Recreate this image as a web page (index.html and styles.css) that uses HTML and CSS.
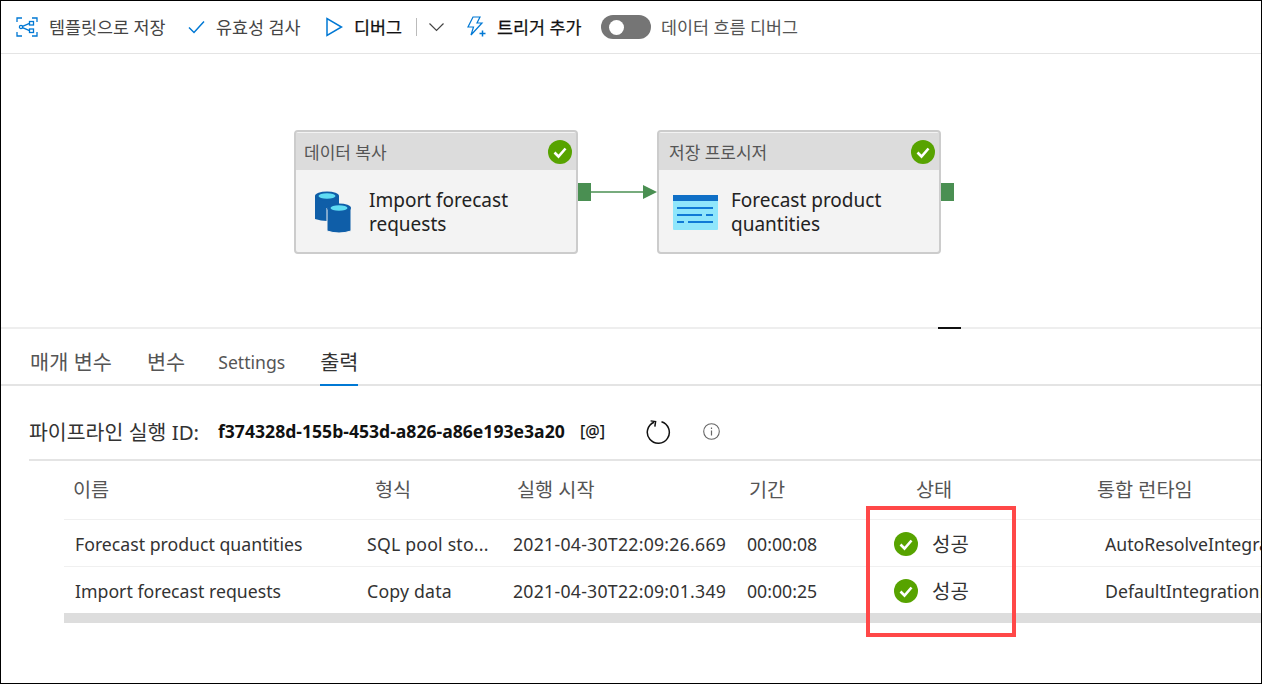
FILE: index.html
```html
<!DOCTYPE html>
<html lang="ko">

<head>
	<meta charset="UTF-8">
	<title>파이프라인 실행</title>
	<link rel="stylesheet" href="styles.css">
</head>

<body>
	<div class="frame">

		<div class="toolbar">
			<div class="tool tool-template">
				<svg class="icon" width="22" height="20" viewBox="0 0 22 20" fill="none" stroke="#0078d4" stroke-width="1.3">
					<path d="M1 5V1h5M16 1h5v4M21 15v4h-5M6 19H1v-4"/>
					<circle cx="5" cy="10" r="1.6"/>
					<rect x="13.5" y="4.5" width="4" height="3.5"/>
					<rect x="13.5" y="12" width="4" height="3.5"/>
					<path d="M6.5 9.3l7-3M6.5 10.7l7 3"/>
				</svg>
				<span>템플릿으로 저장</span>
			</div>
			<div class="tool tool-validate">
				<svg class="icon" width="17" height="14" viewBox="0 0 17 14" fill="none" stroke="#0078d4" stroke-width="1.5">
					<path d="M1 7.5l5 5L16 1.5"/>
				</svg>
				<span>유효성 검사</span>
			</div>
			<div class="tool tool-debug">
				<svg class="icon" width="17" height="20" viewBox="0 0 17 20" fill="none" stroke="#0078d4" stroke-width="1.5">
					<path d="M1 1.5v17L15.5 10z"/>
				</svg>
				<span class="strong">디버그</span>
			</div>
			<div class="tool-sep"></div>
			<svg class="chevron" width="17" height="10" viewBox="0 0 17 10" fill="none" stroke="#444" stroke-width="1.2">
				<path d="M1.5 1.5L8.5 8.5 15.5 1.5"/>
			</svg>
			<div class="tool tool-trigger">
				<svg class="icon" width="21" height="22" viewBox="0 0 21 22" fill="none" stroke="#0078d4" stroke-width="1.2">
					<path d="M7 1h7l-3 6h5L5 19l2.500-8H2z"/>
					<path d="M16.500 14.500v6M13.500 17.500h6" stroke-width="1.5"/>
				</svg>
				<span class="strong">트리거 추가</span>
			</div>
			<div class="toggle"><div class="knob"></div></div>
			<span class="toggle-label">데이터 흐름 디버그</span>
		</div>

		<div class="canvas">
			<div class="node node-copy">
				<div class="node-head">데이터 복사</div>
				<div class="node-body">
					<svg class="node-icon" width="37" height="42" viewBox="0 0 37 42">
						<path d="M0 5h24v23q-12 4-24 0z" fill="#0f5ea8"/>
						<ellipse cx="12" cy="5" rx="12" ry="4.500" fill="#0f5ea8"/>
						<ellipse cx="12" cy="5" rx="8.500" ry="2.800" fill="#5fdcf3"/>
						<path d="M12 17h24v23q-12 4-24 0z" fill="#0f5ea8" stroke="#f3f3f3"/>
						<ellipse cx="24" cy="17" rx="12" ry="4.500" fill="#0f5ea8"/>
						<ellipse cx="24" cy="17" rx="8.500" ry="2.800" fill="#5fdcf3"/>
					</svg>
					<div class="node-title">Import forecast requests</div>
				</div>
				<svg class="node-check" width="24" height="24" viewBox="0 0 24 24">
					<circle cx="12" cy="12" r="12" fill="#57a300"/>
					<path d="M6.500 12.500l4 4 7-8" fill="none" stroke="#fff" stroke-width="2.600"/>
				</svg>
			</div>

			<div class="port port-copy"></div>
			<svg class="link" width="66" height="16" viewBox="0 0 66 16">
				<path d="M0 8h54" stroke="#4a8f52" stroke-width="1.500"/>
				<path d="M52 1l14 7-14 7z" fill="#4a8f52"/>
			</svg>

			<div class="node node-proc">
				<div class="node-head">저장 프로시저</div>
				<div class="node-body">
					<svg class="node-icon" width="45" height="35" viewBox="0 0 45 35">
						<rect width="45" height="35" rx="1" fill="#8fe6fb"/>
						<rect width="45" height="6" fill="#0f6fc6"/>
						<path d="M4 13h36M4 20h25M33 20h7M4 27h7M15 27h25" stroke="#0f7ad6" stroke-width="2"/>
					</svg>
					<div class="node-title">Forecast product quantities</div>
				</div>
				<svg class="node-check" width="24" height="24" viewBox="0 0 24 24">
					<circle cx="12" cy="12" r="12" fill="#57a300"/>
					<path d="M6.500 12.500l4 4 7-8" fill="none" stroke="#fff" stroke-width="2.600"/>
				</svg>
			</div>
			<div class="port port-proc"></div>
		</div>

		<div class="splitter"><div class="grip"></div></div>

		<div class="tabs">
			<div class="tab">매개 변수</div>
			<div class="tab">변수</div>
			<div class="tab tab-en">Settings</div>
			<div class="tab tab-active">출력</div>
		</div>

		<div class="run-row">
			<span class="run-label">파이프라인 실행 ID:</span>
			<span class="run-id">f374328d-155b-453d-a826-a86e193e3a20</span>
			<span class="run-at">[@]</span>
			<svg class="run-refresh" width="25" height="26" viewBox="0 0 25 26" fill="none" stroke="#111" stroke-width="1.500">
				<path d="M15.500 2.800A11 11 0 1 1 8 3.200"/>
				<path d="M4.500 2.500H9.500V7.500" transform="rotate(8 9 3)"/>
			</svg>
			<svg class="run-info" width="17" height="17" viewBox="0 0 17 17" fill="none" stroke="#666">
				<circle cx="8.500" cy="8.500" r="7.800" stroke-width="1.100"/>
				<path d="M8.500 7.500v5M8.500 4.500v1.500" stroke-width="1.200"/>
			</svg>
		</div>

		<div class="table-wrap">
			<table class="runs">
				<colgroup>
					<col class="c-name"><col class="c-type"><col class="c-start"><col class="c-dur"><col class="c-status"><col>
				</colgroup>
				<thead>
					<tr>
						<th class="h-name">이름</th>
						<th class="h-type">형식</th>
						<th class="h-start">실행 시작</th>
						<th class="h-dur">기간</th>
						<th class="h-status">상태</th>
						<th class="h-rt">통합 런타임</th>
					</tr>
				</thead>
				<tbody>
					<tr>
						<td class="d-name">Forecast product quantities</td>
						<td class="d-type">SQL pool sto...</td>
						<td class="d-start">2021-04-30T22:09:26.669</td>
						<td>00:00:08</td>
						<td>
							<div class="status">
								<svg width="24" height="24" viewBox="0 0 24 24">
									<circle cx="12" cy="12" r="12" fill="#57a300"/>
									<path d="M6.500 12.500l4 4 7-8" fill="none" stroke="#fff" stroke-width="2.600"/>
								</svg>
								<span>성공</span>
							</div>
						</td>
						<td>AutoResolveIntegrationRuntime</td>
					</tr>
					<tr>
						<td class="d-name">Import forecast requests</td>
						<td class="d-type">Copy data</td>
						<td class="d-start">2021-04-30T22:09:01.349</td>
						<td>00:00:25</td>
						<td>
							<div class="status">
								<svg width="24" height="24" viewBox="0 0 24 24">
									<circle cx="12" cy="12" r="12" fill="#57a300"/>
									<path d="M6.500 12.500l4 4 7-8" fill="none" stroke="#fff" stroke-width="2.600"/>
								</svg>
								<span>성공</span>
							</div>
						</td>
						<td>DefaultIntegrationRuntime</td>
					</tr>
				</tbody>
			</table>
			<div class="hscroll"></div>
		</div>

		<!-- red callout drawn over the status column -->
		<div class="callout"></div>
	</div>
</body>

</html>
```

FILE: styles.css
```css
/* Basic reset and styling */
* {
	margin: 0;
	padding: 0;
	box-sizing: border-box;
}

body {
	background-color: #fff;
	font-family: "Noto Sans", "Noto Sans CJK KR", sans-serif;
	color: #333;
}

.frame {
	position: relative;
	width: 1262px;
	height: 684px;
	border: 1px solid #000;
	overflow: hidden;
}

/* toolbar */
.toolbar {
	display: flex;
	align-items: center;
	height: 53px;
	padding: 0 0 0 15px;
	border-bottom: 1px solid #e4e4e4;
	font-size: 17.4px;
	color: #444;
}

.toolbar span {
	margin-bottom: 2px;
}

.tool {
	display: flex;
	align-items: center;
}

.icon {
	flex: none;
}

.tool-template {
	gap: 11px;
	width: 172px;
}

.tool-validate {
	gap: 11px;
	width: 138px;
}

.tool-debug {
	gap: 11px;
	width: 90px;
}

.strong {
	color: #111;
	-webkit-text-stroke: 0.25px #111;
}

.tool-sep {
	width: 1px;
	height: 18px;
	background-color: #bbb;
}

.chevron {
	margin: 0 21px 0 11px;
}

.tool-trigger {
	gap: 10px;
	width: 135px;
}

.toggle {
	display: flex;
	align-items: center;
	width: 50px;
	height: 24px;
	margin-right: 10px;
	padding-left: 8px;
	background-color: #757575;
	border-radius: 12px;
}

.knob {
	width: 15px;
	height: 15px;
	background-color: #fff;
	border-radius: 50%;
}

.toggle-label {
	color: #555;
}

/* pipeline canvas, nodes sit at free positions */
.canvas {
	position: relative;
	height: 273px;
}

.node {
	position: absolute;
	top: 76px;
	width: 284px;
	height: 124px;
	background-color: #f3f3f3;
	border: 2px solid #ccc;
	border-radius: 4px;
}

.node-copy {
	left: 293px;
}

.node-proc {
	left: 656px;
}

.node-head {
	height: 37px;
	padding: 10px 0 0 8px;
	margin-top: 1px;
	background-color: #dcdcdc;
	font-size: 17px;
	line-height: 20px;
	color: #555;
}

.node-proc .node-head {
	padding-left: 10px;
}

.node-body {
	display: flex;
	align-items: center;
	height: 84px;
}

.node-copy .node-body {
	padding: 0 20px 0 19px;
	gap: 17px;
}

.node-proc .node-body {
	padding: 0 20px 0 14px;
	gap: 13px;
}

.node-title {
	font-size: 19px;
	line-height: 24px;
	color: #222;
}

.node-icon {
	flex: none;
}

.node-check {
	position: absolute;
	top: 8px;
	right: 4px;
}

.port {
	position: absolute;
	top: 129px;
	width: 13px;
	height: 18px;
	background-color: #4a8f52;
}

.port-copy {
	left: 577px;
}

.port-proc {
	left: 940px;
}

.link {
	position: absolute;
	left: 590px;
	top: 130px;
}

/* splitter between canvas and details */
.splitter {
	position: relative;
	height: 2px;
	background-color: #eee;
}

.grip {
	position: absolute;
	left: 937px;
	top: 0;
	width: 23px;
	height: 2px;
	background-color: #111;
}

/* tabs */
.tabs {
	display: flex;
	gap: 35px;
	height: 57px;
	padding: 0 0 0 29px;
	border-bottom: 2px solid #e4e4e4;
	font-size: 20.8px;
	color: #555;
}

.tab {
	height: 57px;
	padding-top: 19px;
	line-height: 28px;
}

.tab-en {
	margin-left: -2px;
	font-size: 17.6px;
}

.tab-active {
	color: #333;
	border-bottom: 2px solid #0078d4;
}

/* run id row */
.run-row {
	position: relative;
	display: flex;
	align-items: center;
	height: 75px;
	margin-left: 28px;
	padding-top: 16px;
	border-bottom: 2px solid #e4e4e4;
}

.run-label {
	width: 189px;
	font-size: 20.5px;
	color: #333;
}

.run-id {
	width: 362px;
	font-size: 17.6px;
	font-weight: 700;
	color: #111;
}

.run-at {
	width: 66px;
	font-size: 16px;
	color: #111;
	-webkit-text-stroke: 0.2px #111;
}

.run-refresh {
	margin-top: 2px;
	margin-right: 32px;
}

.run-info {
	margin-top: 2px;
}

/* activity table */
.table-wrap {
	margin-left: 63px;
	overflow: hidden;
}

.runs {
	width: 1197px;
	table-layout: fixed;
	border-collapse: collapse;
}

.c-name {
	width: 295px;
}

.c-type {
	width: 146px;
}

.c-start {
	width: 234px;
}

.c-dur {
	width: 147px;
}

.c-status {
	width: 211px;
}

th {
	height: 58px;
	padding-bottom: 2px;
	font-size: 19.7px;
	font-weight: 400;
	text-align: left;
	color: #555;
	border-bottom: 1px solid #f0f0f0;
}

td {
	height: 47px;
	padding-top: 2px;
	padding-left: 8px;
	font-size: 17.7px;
	color: #333;
	white-space: nowrap;
	overflow: hidden;
	border-bottom: 1px solid #f0f0f0;
}

tbody tr:last-child td {
	border-bottom: none;
}

.h-name {
	padding-left: 9px;
}

.h-type {
	padding-left: 16px;
}

.h-start {
	padding-left: 12px;
}

.h-dur {
	padding-left: 10px;
}

.h-status {
	padding-left: 30px;
}

.d-name {
	padding-left: 11px;
}

.d-type {
	letter-spacing: 0.2px;
}

.d-start {
	letter-spacing: 0.25px;
}

.status {
	display: flex;
	align-items: center;
	gap: 14px;
	font-size: 20px;
}

.hscroll {
	height: 10px;
	background-color: #ddd;
}

.callout {
	position: absolute;
	left: 865px;
	top: 505px;
	width: 150px;
	height: 131px;
	border: 4px solid #ff4848;
}
```
